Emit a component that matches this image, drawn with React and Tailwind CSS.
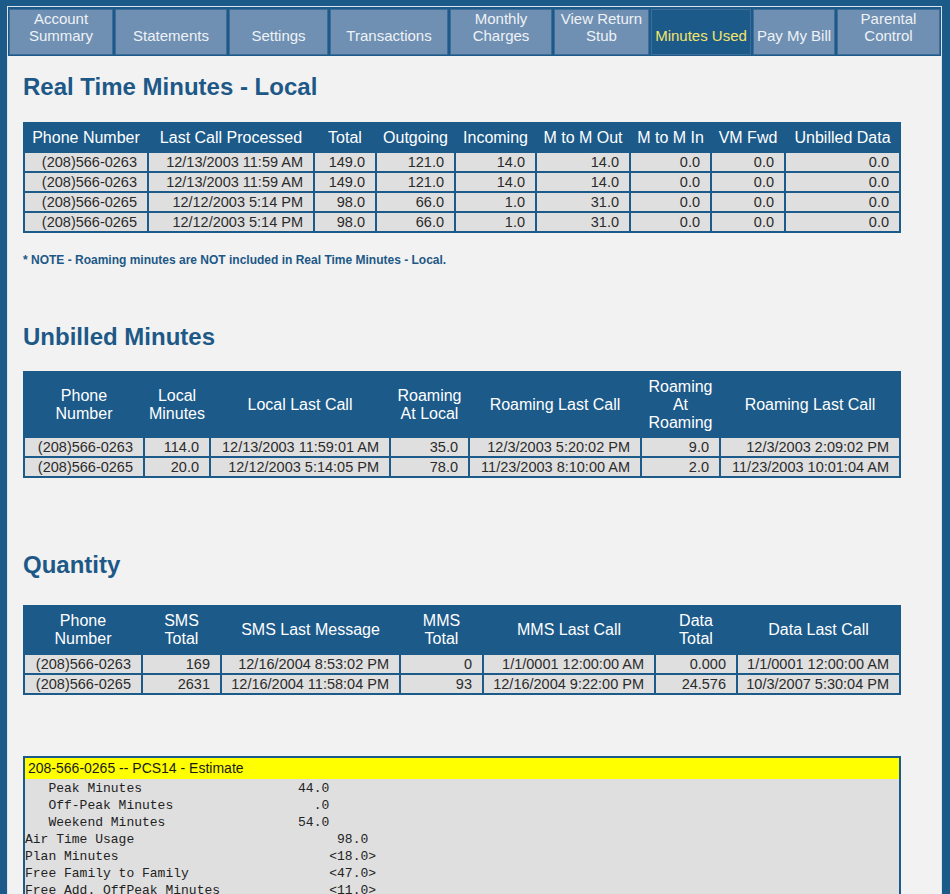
import React from 'react';

const BLUE = 'bg-[#1c5a8a]';

const tabs = [
    { label: ['Account', 'Summary'], w: 'w-[104px]' },
    { label: ['Statements'], w: 'w-[112px]' },
    { label: ['Settings'], w: 'w-[99px]' },
    { label: ['Transactions'], w: 'w-[118px]' },
    { label: ['Monthly', 'Charges'], w: 'w-[102px]' },
    { label: ['View Return', 'Stub'], w: 'w-[95px]' },
    { label: ['Minutes Used'], w: 'w-[100px]', active: true },
    { label: ['Pay My Bill'], w: 'w-[82px]' },
    { label: ['Parental', 'Control'], w: 'flex-1' },
];

const realTime = {
    cols: [122, 164, 60, 77, 79, 92, 79, 72, 113],
    head: [['Phone Number'], ['Last Call Processed'], ['Total'], ['Outgoing'], ['Incoming'], ['M to M Out'], ['M to M In'], ['VM Fwd'], ['Unbilled Data']],
    headH: 'h-[27px]',
    rows: [
        ['(208)566-0263', '12/13/2003 11:59 AM', '149.0', '121.0', '14.0', '14.0', '0.0', '0.0', '0.0'],
        ['(208)566-0263', '12/13/2003 11:59 AM', '149.0', '121.0', '14.0', '14.0', '0.0', '0.0', '0.0'],
        ['(208)566-0265', '12/12/2003 5:14 PM', '98.0', '66.0', '1.0', '31.0', '0.0', '0.0', '0.0'],
        ['(208)566-0265', '12/12/2003 5:14 PM', '98.0', '66.0', '1.0', '31.0', '0.0', '0.0', '0.0'],
    ],
};

const unbilled = {
    cols: [118, 64, 178, 77, 170, 77, 178],
    head: [['Phone', 'Number'], ['Local', 'Minutes'], ['Local Last Call'], ['Roaming', 'At Local'], ['Roaming Last Call'], ['Roaming', 'At', 'Roaming'], ['Roaming Last Call']],
    headH: 'h-[63px]',
    rows: [
        ['(208)566-0263', '114.0', '12/13/2003 11:59:01 AM', '35.0', '12/3/2003 5:20:02 PM', '9.0', '12/3/2003 2:09:02 PM'],
        ['(208)566-0265', '20.0', '12/12/2003 5:14:05 PM', '78.0', '11/23/2003 8:10:00 AM', '2.0', '11/23/2003 10:01:04 AM'],
    ],
};

const quantity = {
    cols: [116, 77, 177, 81, 170, 80, 161],
    head: [['Phone', 'Number'], ['SMS', 'Total'], ['SMS Last Message'], ['MMS', 'Total'], ['MMS Last Call'], ['Data', 'Total'], ['Data Last Call']],
    headH: 'h-[46px]',
    rows: [
        ['(208)566-0263', '169', '12/16/2004 8:53:02 PM', '0', '1/1/0001 12:00:00 AM', '0.000', '1/1/0001 12:00:00 AM'],
        ['(208)566-0265', '2631', '12/16/2004 11:58:04 PM', '93', '12/16/2004 9:22:00 PM', '24.576', '10/3/2007 5:30:04 PM'],
    ],
};

const estimate = [
    '   Peak Minutes                    44.0',
    '   Off-Peak Minutes                  .0',
    '   Weekend Minutes                 54.0',
    'Air Time Usage                          98.0',
    'Plan Minutes                           <18.0>',
    'Free Family to Family                  <47.0>',
    'Free Add. OffPeak Minutes              <11.0>',
];

const DataTable = ({ data }) => (
    <table className={`table-fixed w-[878px] border-separate border-spacing-[2px] ${BLUE}`}>
        <colgroup>
            {data.cols.map((w, i) => (
                <col key={i} style={{ width: w }} />
            ))}
        </colgroup>
        <thead>
            <tr>
                {data.head.map((lines, i) => (
                    <th key={i} className={`${data.headH} p-0 text-center align-middle font-normal text-[16px] leading-[18px] text-white`}>
                        {lines.map((l, j) => (
                            <div key={j}>{l}</div>
                        ))}
                    </th>
                ))}
            </tr>
        </thead>
        <tbody>
            {data.rows.map((row, r) => (
                <tr key={r}>
                    {row.map((cell, c) => (
                        <td key={c} className="h-[18px] p-0 pr-[10px] text-right align-middle whitespace-nowrap bg-[#dfdfdf] text-[14.5px] leading-[18px] text-[#2b2b2b]">
                            {cell}
                        </td>
                    ))}
                </tr>
            ))}
        </tbody>
    </table>
);

const Heading = ({ children, className }) => (
    <h2 className={`text-[24px] leading-[26px] font-bold text-[#1d5887] ${className}`}>{children}</h2>
);

export default function App() {
    return (
        <div className={`min-h-screen ${BLUE} pl-[7px] pr-[8px] pt-[6px]`} style={{ fontFamily: '"Liberation Sans", Arial, sans-serif' }}>
            <div className={`border border-[#dbe3ec] ${BLUE}`}>
                {/* nav tabs */}
                <div className="flex gap-[2px] px-[1px] pt-[2px] pb-[1px]">
                    {tabs.map((t, i) => (
                        <div
                            key={i}
                            className={`${t.w} h-[46px] flex flex-col items-center justify-end pb-[10px] text-center text-[15px] leading-[17px] border border-[#3d6d98] ${t.active ? 'bg-[#1c5a8a] text-[#f4e46a] border-[#1c5a8a]' : 'bg-[#6f90b2] text-[#eef2f7]'}`}
                        >
                            {t.label.map((l, j) => (
                                <div key={j} className="whitespace-nowrap">{l}</div>
                            ))}
                        </div>
                    ))}
                </div>

                {/* content */}
                <div className="bg-[#f2f2f2] pl-[15px] pt-[18px] pb-0 overflow-hidden">
                    <Heading>Real Time Minutes - Local</Heading>
                    <div className="mt-[22px]">
                        <DataTable data={realTime} />
                    </div>
                    <p className="mt-[20px] text-[12px] leading-[14px] font-bold text-[#1d5887]">
                        * NOTE - Roaming minutes are NOT included in Real Time Minutes - Local.
                    </p>

                    <Heading className="mt-[57px]">Unbilled Minutes</Heading>
                    <div className="mt-[21px]">
                        <DataTable data={unbilled} />
                    </div>

                    <Heading className="mt-[74px]">Quantity</Heading>
                    <div className="mt-[27px]">
                        <DataTable data={quantity} />
                    </div>

                    <div className="mt-[61px] w-[878px] border-2 border-[#1c5a8a] bg-[#dfdfdf]">
                        <div className="bg-[#ffff00] h-[21px] pl-[3px] text-[14px] leading-[21px] text-[#1a1a1a]">
                            208-566-0265 -- PCS14 - Estimate
                        </div>
                        <pre className="m-0 pt-[1px] pb-[6px] text-[13px] leading-[17px] text-[#222]" style={{ fontFamily: '"Liberation Mono", "Courier New", monospace' }}>
                            {estimate.join('\n')}
                        </pre>
                    </div>
                </div>
            </div>
        </div>
    );
}
